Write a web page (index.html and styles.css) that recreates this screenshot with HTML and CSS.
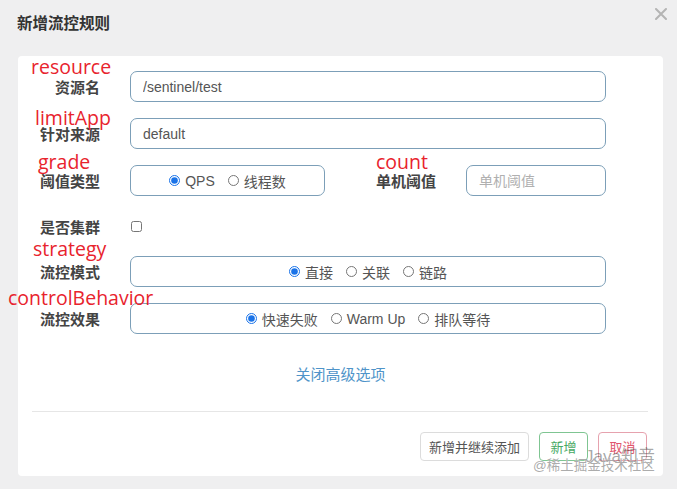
FILE: index.html
```html
<!DOCTYPE html>
<html lang="zh-CN">
<head>
  <meta charset="UTF-8">
  <title>新增流控规则</title>
  <link rel="stylesheet" href="styles.css">
</head>
<body>

  <div class="modal">
    <!-- Header -->
    <div class="modal-header">
      <h4 class="modal-title">新增流控规则</h4>
      <span class="close">
        <svg width="12" height="12" viewBox="0 0 12 12">
          <path d="M1 1 L11 11 M11 1 L1 11" stroke="#b4b4b4" stroke-width="2" stroke-linecap="round"/>
        </svg>
      </span>
    </div>

    <!-- Body -->
    <div class="modal-body">
      <div class="form-row">
        <label class="form-label">资源名</label>
        <input class="form-input" type="text" value="/sentinel/test">
      </div>

      <div class="form-row">
        <label class="form-label">针对来源</label>
        <input class="form-input" type="text" value="default">
      </div>

      <div class="form-row">
        <label class="form-label">阈值类型</label>
        <div class="inline">
          <div class="radio-box grade-box">
            <label class="radio"><input type="radio" name="grade" checked>QPS</label>
            <label class="radio"><input type="radio" name="grade">线程数</label>
          </div>
          <label class="form-label count-label">单机阈值</label>
          <input class="form-input" type="text" placeholder="单机阈值">
        </div>
      </div>

      <div class="form-row check-row">
        <label class="form-label">是否集群</label>
        <div><input class="checkbox" type="checkbox"></div>
      </div>

      <div class="form-row">
        <label class="form-label">流控模式</label>
        <div class="radio-box">
          <label class="radio"><input type="radio" name="strategy" checked>直接</label>
          <label class="radio"><input type="radio" name="strategy">关联</label>
          <label class="radio"><input type="radio" name="strategy">链路</label>
        </div>
      </div>

      <div class="form-row">
        <label class="form-label">流控效果</label>
        <div class="radio-box">
          <label class="radio"><input type="radio" name="behavior" checked>快速失败</label>
          <label class="radio"><input type="radio" name="behavior">Warm Up</label>
          <label class="radio"><input type="radio" name="behavior">排队等待</label>
        </div>
      </div>

      <div class="advanced"><a href="#">关闭高级选项</a></div>

      <hr class="divider">

      <div class="footer">
        <button class="btn">新增并继续添加</button>
        <button class="btn btn-save">新增</button>
        <button class="btn btn-cancel">取消</button>
      </div>

      <!-- red annotations drawn over the form -->
      <span class="note note-resource">resource</span>
      <span class="note note-limit">limitApp</span>
      <span class="note note-grade">grade</span>
      <span class="note note-count">count</span>
      <span class="note note-strategy">strategy</span>
      <span class="note note-behavior">controlBehavior</span>

      <div class="watermark">
        <span class="wm-brand">Java知音</span>
        <span class="wm-site">@稀土掘金技术社区</span>
      </div>
    </div>
  </div>

</body>
</html>
```

FILE: styles.css
```css
body {
  margin: 0;
  padding: 0;
  background-color: #efeff0;
  font-family: "Liberation Sans", "Noto Sans CJK SC", sans-serif;
  color: #555;
}

.modal {
  width: 677px;
  height: 489px;
}

.modal-header {
  display: flex;
  justify-content: space-between;
  align-items: flex-start;
  height: 56px;
  box-sizing: border-box;
  padding: 8px 10px 0 17px;
}

.modal-title {
  margin: 6px 0 0;
  font-size: 15.5px;
  line-height: 20px;
  font-weight: bold;
  color: #333;
}

.close {
  display: block;
  width: 12px;
  height: 12px;
}

.close svg {
  display: block;
}

.modal-body {
  position: relative;
  margin: 0 14px 0 18px;
  padding: 15px 0 15px;
  background-color: #fff;
  border-radius: 4px;
}

.form-row {
  display: grid;
  grid-template-columns: 82px 1fr;
  column-gap: 30px;
  align-items: center;
  padding-right: 57px;
  margin-bottom: 16px;
}

.form-label {
  font-size: 15px;
  font-weight: bold;
  color: #444;
  text-align: right;
  white-space: nowrap;
}

.form-input {
  height: 31px;
  box-sizing: border-box;
  width: 100%;
  padding: 0 12px;
  border: 1px solid #7c9fb8;
  border-radius: 7px;
  font-family: inherit;
  font-size: 14px;
  color: #555;
  outline: none;
}

.form-input::placeholder {
  color: #b0b0b0;
}

.inline {
  display: flex;
  align-items: center;
}

.radio-box {
  display: flex;
  justify-content: center;
  align-items: center;
  height: 31px;
  box-sizing: border-box;
  border: 1px solid #7c9fb8;
  border-radius: 7px;
}

.grade-box {
  flex: 0 0 195px;
}

.count-label {
  margin: 0 30px 0 51px;
}

.inline .form-input {
  flex: 1;
}

.radio {
  display: flex;
  align-items: center;
  font-size: 14px;
  color: #555;
  margin-right: 13px;
}

.radio:last-child {
  margin-right: 0;
}

.radio input {
  width: 11px;
  height: 11px;
  margin: 0 5px 0 0;
  accent-color: #1a73e8;
}

.check-row {
  height: 28px;
}

.checkbox {
  display: block;
  width: 11px;
  height: 11px;
  margin: 0 0 0 1px;
}

.advanced {
  margin-top: 31px;
  text-align: center;
  line-height: 20px;
}

.advanced a {
  font-size: 15px;
  color: #4f94c9;
  text-decoration: none;
}

.divider {
  border: none;
  border-top: 1px solid #e6e6e6;
  margin: 26px 15px 20px 14px;
}

.footer {
  display: flex;
  justify-content: flex-end;
  gap: 10px;
  padding-right: 16px;
}

.btn {
  height: 29px;
  padding: 0 8px;
  background-color: #fff;
  border: 1px solid #dcdcdc;
  border-radius: 4px;
  font-family: inherit;
  font-size: 13px;
  color: #555;
}

.btn-save {
  width: 49px;
  padding: 0;
  border-color: #7fc592;
  color: #47a963;
}

.btn-cancel {
  width: 49px;
  padding: 0;
  border-color: #e6a2ae;
  color: #e0566d;
}

/* red annotations */
.note {
  position: absolute;
  font-family: "Open Sans", sans-serif;
  font-size: 19.5px;
  line-height: 20px;
  color: #e8232d;
  white-space: nowrap;
}

.note-resource { left: 13px; top: 1px; }
.note-limit { left: 17px; top: 52px; }
.note-grade { left: 20px; top: 96px; }
.note-count { left: 358px; top: 96px; }
.note-strategy { left: 15px; top: 183px; }
.note-behavior { left: -10px; top: 232px; }

.watermark {
  position: absolute;
  right: 4px;
  bottom: 2px;
  width: 126px;
  height: 32px;
}

.wm-brand {
  position: absolute;
  right: 4px;
  top: 0;
  font-size: 17px;
  color: rgba(60, 60, 60, 0.45);
  white-space: nowrap;
}

.wm-site {
  position: absolute;
  left: 0;
  bottom: 0;
  font-size: 13.5px;
  color: rgba(150, 150, 150, 0.8);
  text-shadow: 0 0 1px #fff;
  white-space: nowrap;
}
```
